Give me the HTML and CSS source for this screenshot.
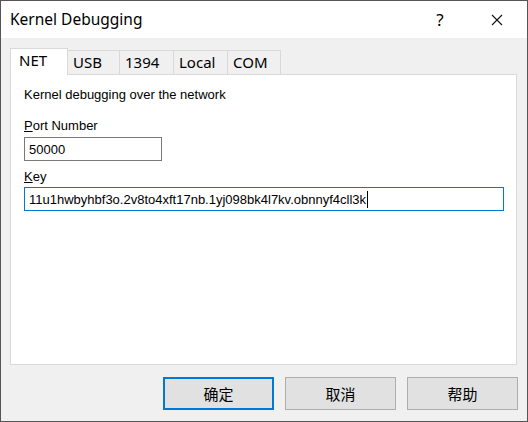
FILE: index.html
```html
<!DOCTYPE html>
<html lang="en">
<head>
<meta charset="utf-8">
<title>Kernel Debugging</title>
<link rel="stylesheet" href="styles.css">
</head>
<body>
<div class="window">
  <div class="titlebar">
    <span class="title">Kernel Debugging</span>
    <span class="tb-btn help">?</span>
    <span class="tb-btn close"><svg width="12" height="12" viewBox="0 0 12 12"><path d="M1 1L11 11M11 1L1 11" stroke="#111" stroke-width="1.1" fill="none"/></svg></span>
  </div>
  <div class="body">
    <div class="tabs">
      <div class="tab tab-net active">NET</div>
      <div class="tab tab-usb">USB</div>
      <div class="tab tab-1394">1394</div>
      <div class="tab tab-local">Local</div>
      <div class="tab tab-com">COM</div>
    </div>
    <div class="panel">
      <p class="desc">Kernel debugging over the network</p>
      <div class="label label-port"><u>P</u>ort Number</div>
      <div class="field field-port">50000</div>
      <div class="label label-key"><u>K</u>ey</div>
      <div class="field field-key">11u1hwbyhbf3o.2v8to4xft17nb.1yj098bk4l7kv.obnnyf4cll3k<span class="caret"></span></div>
    </div>
    <div class="buttons">
      <div class="btn btn-default">确定</div>
      <div class="btn">取消</div>
      <div class="btn">帮助</div>
    </div>
  </div>
</div>
</body>
</html>
```
FILE: styles.css
```css
* { box-sizing: border-box; }
html, body { margin: 0; padding: 0; }
body { width: 528px; height: 422px; overflow: hidden; background: #f0f0f0; }

.window {
  width: 528px;
  height: 422px;
  border: 1px solid #555555;
  display: flex;
  flex-direction: column;
  background: #f0f0f0;
  font-family: "Noto Sans", "Noto Sans CJK SC", sans-serif;
  color: #000;
}

.titlebar {
  height: 37px;
  background: #fff;
  display: flex;
  align-items: center;
  padding: 0 7px 0 9px;
  flex: none;
}
.title { font-size: 15.5px; flex: 1; padding-bottom: 1px; }
.tb-btn { width: 46px; display: flex; justify-content: center; align-items: center; }
.help { font-size: 17px; padding-bottom: 1px; }
.close { margin-left: 11px; }
.close svg { display: block; }

.body {
  flex: 1;
  display: flex;
  flex-direction: column;
  padding: 10px 10px 11px 9px;
}

.tabs { display: flex; align-items: flex-end; height: 26px; flex: none; position: relative; z-index: 1; }
.tab {
  height: 24px;
  border: 1px solid #d9d9d9;
  border-bottom: none;
  background: #f0f0f0;
  font-size: 15px;
  line-height: 22px;
  padding-left: 5px;
  margin-left: -1px;
}
.tab:first-child { margin-left: 0; }
.tab.active { height: 27px; background: #fff; margin-bottom: -1px; padding-left: 8px; }
.tab-net { width: 58px; }
.tab-usb { width: 53px; }
.tab-1394 { width: 55px; }
.tab-local { width: 55px; }
.tab-com { width: 54px; }

.panel {
  flex: 1;
  background: #fff;
  border: 1px solid #d9d9d9;
  padding: 12px 13px 0 13px;
  font-family: "Liberation Sans", Arial, sans-serif;
  font-size: 13px;
  line-height: 15px;
}
.desc { margin: 0 0 16px; }
.label { margin-bottom: 4px; }
.label u { text-underline-offset: 1px; }
.label-key { margin-top: 8px; margin-bottom: 3px; }
.field {
  height: 24px;
  border: 1px solid #7a7a7a;
  padding: 0 0 0 4px;
  display: flex;
  align-items: center;
  white-space: nowrap;
}
.field-port { width: 138px; }
.field-key { width: 480px; border-color: #0078d7; }
.caret { display: inline-block; width: 1px; height: 17px; background: #000; margin-left: 1px; }

.buttons {
  display: flex;
  justify-content: flex-end;
  gap: 11px;
  margin-top: 12px;
  margin-right: -1px;
  flex: none;
}
.btn {
  width: 111px;
  height: 33px;
  background: #e1e1e1;
  border: 1px solid #adadad;
  display: flex;
  justify-content: center;
  align-items: center;
  font-family: "Noto Sans CJK SC", sans-serif;
  font-size: 15px;
}
.btn-default { border: 2px solid #0078d7; }
```
